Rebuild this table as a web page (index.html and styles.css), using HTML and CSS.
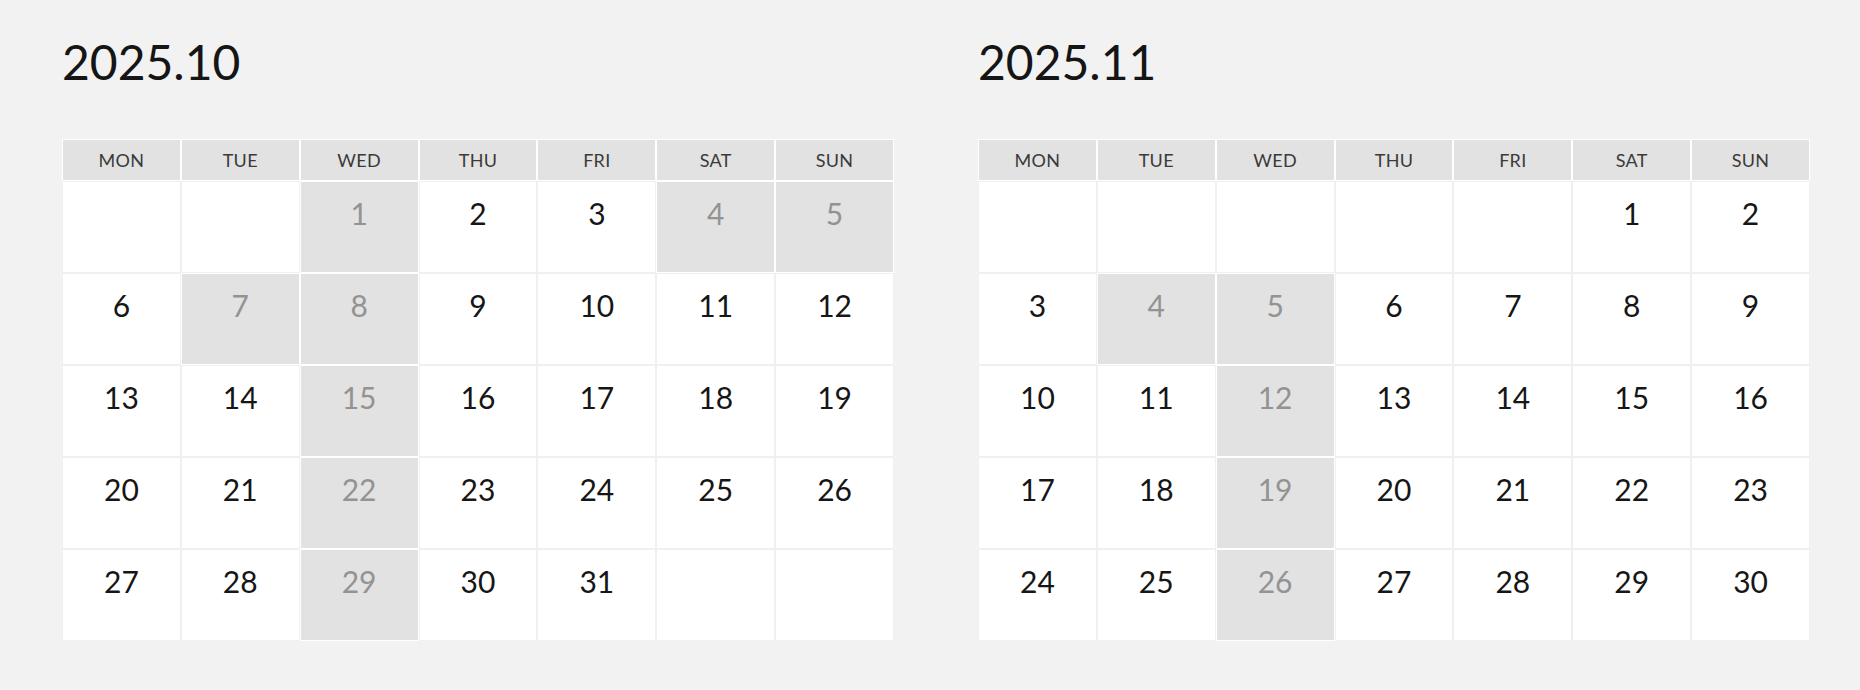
FILE: index.html
```html
<!DOCTYPE html>
<html lang="en">
<head>
<meta charset="utf-8">
<title>Calendar</title>
<link rel="stylesheet" href="styles.css">
</head>
<body>
<div class="page">
  <section class="month">
    <h2 class="month-title">2025.10</h2>
    <div class="cal">
      <div class="hd">MON</div><div class="hd">TUE</div><div class="hd">WED</div><div class="hd">THU</div><div class="hd">FRI</div><div class="hd">SAT</div><div class="hd">SUN</div>
      <div class="day"></div><div class="day"></div><div class="day off">1</div><div class="day">2</div><div class="day">3</div><div class="day off">4</div><div class="day off">5</div>
      <div class="day">6</div><div class="day off">7</div><div class="day off">8</div><div class="day">9</div><div class="day">10</div><div class="day">11</div><div class="day">12</div>
      <div class="day">13</div><div class="day">14</div><div class="day off">15</div><div class="day">16</div><div class="day">17</div><div class="day">18</div><div class="day">19</div>
      <div class="day">20</div><div class="day">21</div><div class="day off">22</div><div class="day">23</div><div class="day">24</div><div class="day">25</div><div class="day">26</div>
      <div class="day">27</div><div class="day">28</div><div class="day off">29</div><div class="day">30</div><div class="day">31</div><div class="day"></div><div class="day"></div>
    </div>
  </section>
  <section class="month">
    <h2 class="month-title">2025.11</h2>
    <div class="cal">
      <div class="hd">MON</div><div class="hd">TUE</div><div class="hd">WED</div><div class="hd">THU</div><div class="hd">FRI</div><div class="hd">SAT</div><div class="hd">SUN</div>
      <div class="day"></div><div class="day"></div><div class="day"></div><div class="day"></div><div class="day"></div><div class="day">1</div><div class="day">2</div>
      <div class="day">3</div><div class="day off">4</div><div class="day off">5</div><div class="day">6</div><div class="day">7</div><div class="day">8</div><div class="day">9</div>
      <div class="day">10</div><div class="day">11</div><div class="day off">12</div><div class="day">13</div><div class="day">14</div><div class="day">15</div><div class="day">16</div>
      <div class="day">17</div><div class="day">18</div><div class="day off">19</div><div class="day">20</div><div class="day">21</div><div class="day">22</div><div class="day">23</div>
      <div class="day">24</div><div class="day">25</div><div class="day off">26</div><div class="day">27</div><div class="day">28</div><div class="day">29</div><div class="day">30</div>
    </div>
  </section>
</div>
</body>
</html>
```
FILE: styles.css
```css
* { box-sizing: border-box; }
html, body {
  margin: 0;
  padding: 0;
  background: #f2f2f2;
  font-family: Lato, "Noto Sans", "Liberation Sans", sans-serif;
  color: #161616;
}
.page {
  display: flex;
  gap: 84px;
  padding: 38px 0 0 62px;
}
.month {
  width: 832px;
}
.month-title {
  margin: 0 0 53px 0;
  font-size: 48px;
  line-height: 1;
  font-weight: 400;
  height: 48px;
  color: #151515;
}
.cal {
  display: grid;
  grid-template-columns: repeat(7, 1fr);
  grid-template-rows: 42px repeat(5, 92px);
}
.hd {
  background: #e2e2e2;
  border: 1px solid #ffffff;
  display: flex;
  align-items: center;
  justify-content: center;
  font-size: 18px;
  color: #3a3a3a;
  letter-spacing: 0.3px;
}
.day {
  background: #ffffff;
  border: 1px solid #f0f0f0;
  text-align: center;
  font-size: 30px;
  line-height: 1;
  padding-top: 16px;
  color: #161616;
}
.day.off {
  background: #e2e2e2;
  border-color: #ffffff;
  color: #939393;
}
```
